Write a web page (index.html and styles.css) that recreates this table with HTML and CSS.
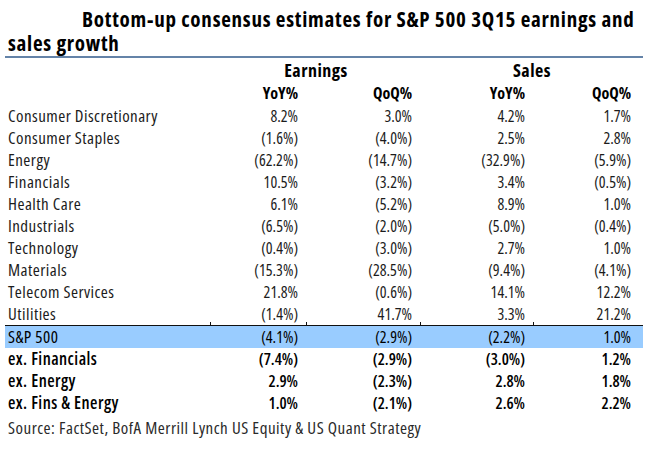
FILE: index.html
```html
<!DOCTYPE html>
<html>
<head>
<meta charset="utf-8">
<link rel="stylesheet" href="styles.css">
</head>
<body>
<div class="page">
  <h1 class="title">
    <span class="title-l1">Bottom-up consensus estimates for S&amp;P 500 3Q15 earnings and</span>
    <span class="title-l2">sales growth</span>
  </h1>
  <div class="rule"></div>
  <table class="grid">
    <colgroup>
      <col class="c-label"><col class="c1"><col class="c2"><col class="c3"><col class="c4">
    </colgroup>
    <thead>
      <tr class="group">
        <th></th><th colspan="2">Earnings</th><th colspan="2">Sales</th>
      </tr>
      <tr class="sub">
        <th></th><th>YoY%</th><th>QoQ%</th><th>YoY%</th><th>QoQ%</th>
      </tr>
    </thead>
    <tbody>
      <tr><td>Consumer Discretionary</td><td>8.2%</td><td>3.0%</td><td>4.2%</td><td>1.7%</td></tr>
      <tr><td>Consumer Staples</td><td>(1.6%)</td><td>(4.0%)</td><td>2.5%</td><td>2.8%</td></tr>
      <tr><td>Energy</td><td>(62.2%)</td><td>(14.7%)</td><td>(32.9%)</td><td>(5.9%)</td></tr>
      <tr><td>Financials</td><td>10.5%</td><td>(3.2%)</td><td>3.4%</td><td>(0.5%)</td></tr>
      <tr><td>Health Care</td><td>6.1%</td><td>(5.2%)</td><td>8.9%</td><td>1.0%</td></tr>
      <tr><td>Industrials</td><td>(6.5%)</td><td>(2.0%)</td><td>(5.0%)</td><td>(0.4%)</td></tr>
      <tr><td>Technology</td><td>(0.4%)</td><td>(3.0%)</td><td>2.7%</td><td>1.0%</td></tr>
      <tr><td>Materials</td><td>(15.3%)</td><td>(28.5%)</td><td>(9.4%)</td><td>(4.1%)</td></tr>
      <tr><td>Telecom Services</td><td>21.8%</td><td>(0.6%)</td><td>14.1%</td><td>12.2%</td></tr>
      <tr class="last"><td>Utilities</td><td>(1.4%)</td><td>41.7%</td><td>3.3%</td><td>21.2%</td></tr>
      <tr class="total"><td>S&amp;P 500</td><td>(4.1%)</td><td>(2.9%)</td><td>(2.2%)</td><td>1.0%</td></tr>
      <tr class="ex"><td>ex. Financials</td><td>(7.4%)</td><td>(2.9%)</td><td>(3.0%)</td><td>1.2%</td></tr>
      <tr class="ex"><td>ex. Energy</td><td>2.9%</td><td>(2.3%)</td><td>2.8%</td><td>1.8%</td></tr>
      <tr class="ex"><td>ex. Fins &amp; Energy</td><td>1.0%</td><td>(2.1%)</td><td>2.6%</td><td>2.2%</td></tr>
    </tbody>
  </table>
  <p class="source">Source: FactSet, BofA Merrill Lynch US Equity &amp; US Quant Strategy</p>
</div>
</body>
</html>
```

FILE: styles.css
```css
html, body {
  margin: 0;
  padding: 0;
  background: #ffffff;
}
body {
  font-family: "Open Sans", "Liberation Sans", sans-serif;
  font-stretch: 75%;
  color: #111;
}
.page {
  width: 648px;
  height: 452px;
  padding: 0 5px 0 5px;
  box-sizing: border-box;
  overflow: hidden;
}
.title {
  margin: 0;
  padding-top: 7px;
  font-size: 21px;
  font-weight: 700;
  line-height: 24px;
  letter-spacing: 0.75px;
  white-space: nowrap;
  color: #000;
}
.title-l1 {
  display: block;
  padding-left: 77px;
}
.title-l2 {
  display: block;
  padding-left: 3px;
}
.rule {
  height: 2px;
  background: #6483a8;
  margin-top: 1px;
}
.grid {
  border-collapse: collapse;
  table-layout: fixed;
  width: 638px;
  font-size: 16px;
}
.c-label { width: 206px; }
.c1 { width: 96px; }
.c2 { width: 114px; }
.c3 { width: 113px; }
.c4 { width: 109px; }
.grid th, .grid td {
  padding: 0 9px 0 0;
  height: 22px;
  line-height: 22px;
  white-space: nowrap;
  text-align: right;
}
.grid th:last-child, .grid td:last-child {
  padding-right: 12px;
}
.grid th {
  font-weight: 700;
  color: #000;
}
.grid .group th {
  text-align: center;
  height: 24px;
  line-height: 24px;
  padding-right: 0;
  font-size: 18px;
  letter-spacing: 0.5px;
}
.grid .sub th {
  height: 23px;
  line-height: 23px;
}
.grid td:first-child {
  text-align: left;
  padding-left: 3px;
  font-size: 17px;
  letter-spacing: 0.45px;
}
.grid td {
  color: #1c1c1c;
}
.grid tr.last td {
  border-bottom: 1px solid #111;
}
.grid tr.last td:not(:last-child) {
  background: linear-gradient(#111, #111) no-repeat right bottom / 1px 3px;
}
.grid tr.total td {
  background: #99ccff;
  color: #000;
  font-weight: 500;
}
.grid tr.ex td {
  color: #000;
  font-weight: 600;
}
.source {
  margin: 3px 0 0 3px;
  font-size: 17px;
  font-weight: 400;
  line-height: 22px;
  letter-spacing: 0.5px;
  color: #2a2a2a;
}
```
